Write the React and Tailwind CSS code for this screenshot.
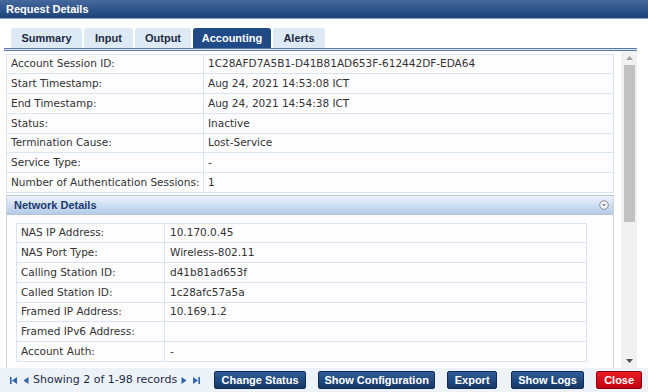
import React from "react";

const rows1 = [
  ["Account Session ID:", "1C28AFD7A5B1-D41B81AD653F-612442DF-EDA64"],
  ["Start Timestamp:", "Aug 24, 2021 14:53:08 ICT"],
  ["End Timestamp:", "Aug 24, 2021 14:54:38 ICT"],
  ["Status:", "Inactive"],
  ["Termination Cause:", "Lost-Service"],
  ["Service Type:", "-"],
  ["Number of Authentication Sessions:", "1"],
];

const rows2 = [
  ["NAS IP Address:", "10.170.0.45"],
  ["NAS Port Type:", "Wireless-802.11"],
  ["Calling Station ID:", "d41b81ad653f"],
  ["Called Station ID:", "1c28afc57a5a"],
  ["Framed IP Address:", "10.169.1.2"],
  ["Framed IPv6 Address:", ""],
  ["Account Auth:", "-"],
];

const heights = ["h-[19px]", "h-[20px]", "h-[20px]", "h-[20px]", "h-[19px]", "h-[20px]", "h-[20px]"];

const tabs = [
  ["Summary", "w-[71px]"],
  ["Input", "w-[49px]"],
  ["Output", "w-[56px]"],
  ["Accounting", "w-[78px]"],
  ["Alerts", "w-[52px]"],
];

const bold = { fontFamily: '"Liberation Sans", Arial, sans-serif' };

function Btn({ children, w, red }) {
  return (
    <div
      style={bold}
      className={
        "h-[18px] flex items-center justify-center rounded-[2px] border text-[11px] font-bold text-white " +
        w +
        (red
          ? " bg-gradient-to-b from-[#ec1c28] to-[#c00010] border-[#8c000c]"
          : " bg-gradient-to-b from-[#2f5d98] to-[#163868] border-[#0f2b55]")
      }
    >
      {children}
    </div>
  );
}

export default function App() {
  return (
    <div
      className="w-[648px] h-[392px] bg-white flex flex-col overflow-hidden text-[10.5px] text-[#333]"
      style={{ fontFamily: '"DejaVu Sans", Verdana, sans-serif' }}
    >
      {/* title bar */}
      <div
        style={bold}
        className="h-[19px] shrink-0 flex items-center pl-[6px] bg-gradient-to-b from-[#45699d] to-[#1c4378] border-b border-[#8aa4c8] text-white text-[11px] font-bold"
      >
        Request Details
      </div>

      <div className="flex-1 flex flex-col pl-[4px] pr-[11px] min-h-0">
        {/* tabs */}
        <div className="flex items-end gap-[2px] pl-[7px] pt-[9px] h-[29px] shrink-0">
          {tabs.map(([t, w]) => (
            <div
              key={t}
              style={bold}
              className={
                "h-[20px] rounded-t-[3px] flex items-center justify-center text-[11px] font-bold " +
                w +
                (t === "Accounting"
                  ? " bg-[#1f4a85] text-white"
                  : " bg-[#dde9f5] text-[#1c2940]")
              }
            >
              {t}
            </div>
          ))}
        </div>
        <div className="h-[3px] shrink-0 border-y border-[#5a79a4] bg-[#dbe6f3]" />

        {/* content + scrollbar */}
        <div className="flex-1 flex min-h-0">
          <div className="flex-1 overflow-hidden pl-[2px] pr-[7px] pt-[3px]">
            {/* table 1 */}
            <div className="border-t border-[#d8e3f3] bg-[#fdfcff]">
              {rows1.map(([l, v], i) => (
                <div key={l} className={"flex border-b border-[#d8e3f3] " + heights[i]}>
                  <div className="w-[198px] shrink-0 border-x border-[#d8e3f3] flex items-center pl-[4px]">
                    {l}
                  </div>
                  <div className="flex-1 border-r border-[#d8e3f3] flex items-center pl-[4px]">
                    {v}
                  </div>
                </div>
              ))}
            </div>

            {/* network details panel */}
            <div className="mt-[2px] border-x border-[#d4d4d4]">
              <div className="h-[20px] flex items-center justify-between pl-[7px] pr-[4px] border-t border-[#b9c3cf] border-b border-[#8ca2bd] bg-gradient-to-b from-[#ecf3fc] to-[#b3cbe9]">
                <span style={bold} className="text-[11px] font-bold text-[#1a3a6c]">
                  Network Details
                </span>
                <svg width="10" height="10" viewBox="0 0 10 10">
                  <circle cx="5" cy="5" r="4.3" fill="#eef2f7" stroke="#8b8f96" strokeWidth="1" />
                  <path d="M3.2 4.2 L6.8 4.2 L5 6.2 Z" fill="#6a6f78" />
                </svg>
              </div>
              <div className="bg-[#fdfcfe] pt-[8px] pl-[9px] pr-[26px] pb-[20px]">
                <div className="border-t border-[#d8e3f3]">
                  {rows2.map(([l, v], i) => (
                    <div key={l} className={"flex border-b border-[#d8e3f3] " + heights[i]}>
                      <div className="w-[149px] shrink-0 border-x border-[#d8e3f3] flex items-center pl-[4px]">
                        {l}
                      </div>
                      <div className="flex-1 border-r border-[#d8e3f3] flex items-center pl-[5px]">
                        {v}
                      </div>
                    </div>
                  ))}
                </div>
              </div>
            </div>
          </div>

          {/* scrollbar */}
          <div className="w-[16px] shrink-0 bg-[#f1f1f1] flex flex-col items-center">
            <div className="h-[14px] flex items-center justify-center">
              <svg width="7" height="4" viewBox="0 0 7 4">
                <path d="M0 4 L3.5 0 L7 4 Z" fill="#a3a3a3" />
              </svg>
            </div>
            <div className="w-[11px] h-[157px] bg-[#c1c1c1]" />
            <div className="flex-1" />
            <div className="h-[14px] flex items-center justify-center">
              <svg width="7" height="4" viewBox="0 0 7 4">
                <path d="M0 0 L3.5 4 L7 0 Z" fill="#505050" />
              </svg>
            </div>
          </div>
        </div>
      </div>

      {/* footer */}
      <div className="h-[24px] shrink-0 bg-[#edf1f8] flex items-center pl-[10px]">
        <div className="flex items-center text-[#1c2c48] text-[11px]">
          <svg width="8" height="7" viewBox="0 0 8 7" className="mr-[5px]">
            <rect x="0" y="0" width="1.6" height="7" fill="#3064ad" />
            <path d="M7 0 L2 3.5 L7 7 Z" fill="#3064ad" />
          </svg>
          <svg width="6" height="7" viewBox="0 0 6 7" className="mr-[4px]">
            <path d="M5.5 0 L0.5 3.5 L5.5 7 Z" fill="#3064ad" />
          </svg>
          <span>Showing 2 of 1-98 records</span>
          <svg width="6" height="7" viewBox="0 0 6 7" className="ml-[4px]">
            <path d="M0.5 0 L5.5 3.5 L0.5 7 Z" fill="#3064ad" />
          </svg>
          <svg width="8" height="7" viewBox="0 0 8 7" className="ml-[5px]">
            <path d="M1 0 L6 3.5 L1 7 Z" fill="#3064ad" />
            <rect x="6.4" y="0" width="1.6" height="7" fill="#3064ad" />
          </svg>
        </div>
        <div className="ml-[14px] flex items-center">
          <Btn w="w-[92px]">Change Status</Btn>
          <div className="w-[12px]" />
          <Btn w="w-[117px]">Show Configuration</Btn>
          <div className="w-[12px]" />
          <Btn w="w-[50px]">Export</Btn>
          <div className="w-[14px]" />
          <Btn w="w-[73px]">Show Logs</Btn>
          <div className="w-[12px]" />
          <Btn w="w-[46px]" red>
            Close
          </Btn>
        </div>
      </div>
    </div>
  );
}
